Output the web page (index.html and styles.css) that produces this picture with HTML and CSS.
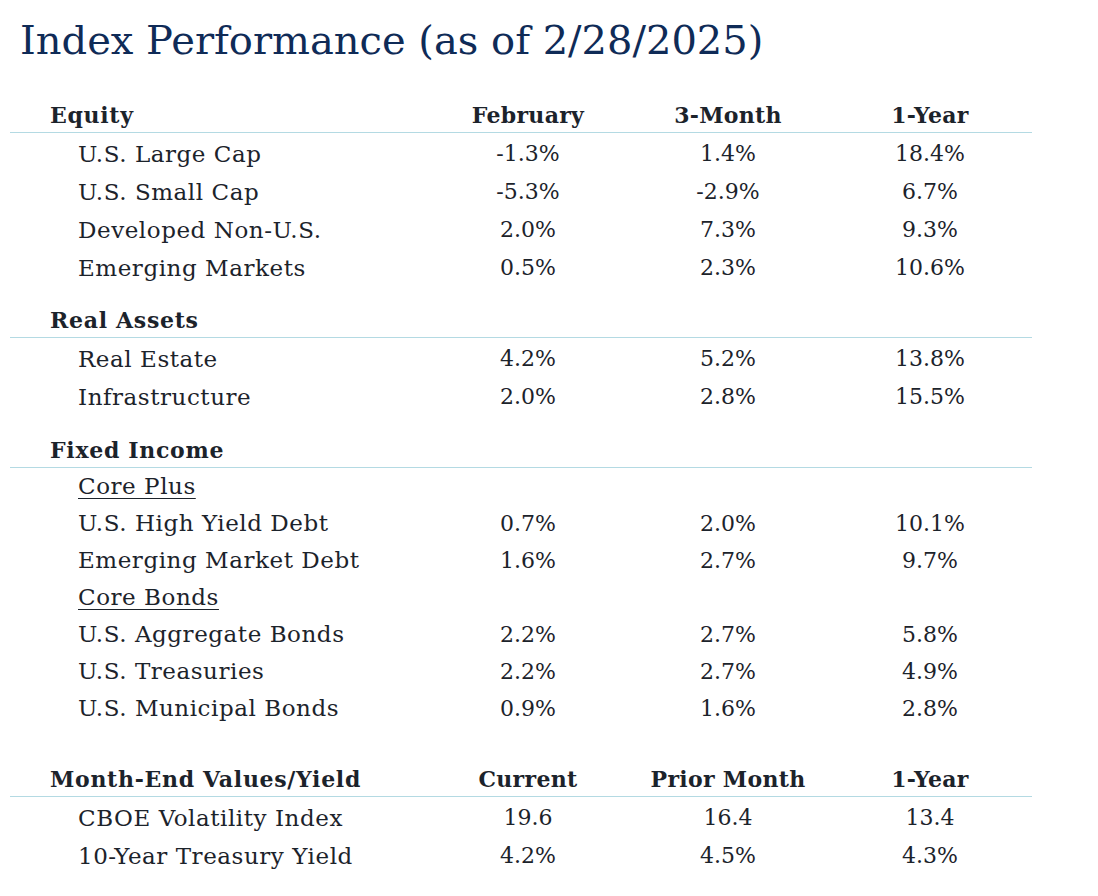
FILE: index.html
```html
<!DOCTYPE html>
<html>
<head>
<meta charset="utf-8">
<link rel="stylesheet" href="styles.css">
</head>
<body>
<h1 class="title">Index Performance (as of 2/28/2025)</h1>
<div class="table">
  <div class="section first">
    <div class="row head"><span class="label">Equity</span><span>February</span><span>3-Month</span><span>1-Year</span></div>
    <div class="row"><span class="label">U.S. Large Cap</span><span>-1.3%</span><span>1.4%</span><span>18.4%</span></div>
    <div class="row"><span class="label">U.S. Small Cap</span><span>-5.3%</span><span>-2.9%</span><span>6.7%</span></div>
    <div class="row"><span class="label">Developed Non-U.S.</span><span>2.0%</span><span>7.3%</span><span>9.3%</span></div>
    <div class="row"><span class="label">Emerging Markets</span><span>0.5%</span><span>2.3%</span><span>10.6%</span></div>
  </div>
  <div class="section real">
    <div class="row head"><span class="label">Real Assets</span><span></span><span></span><span></span></div>
    <div class="row"><span class="label">Real Estate</span><span>4.2%</span><span>5.2%</span><span>13.8%</span></div>
    <div class="row"><span class="label">Infrastructure</span><span>2.0%</span><span>2.8%</span><span>15.5%</span></div>
  </div>
  <div class="section fixed">
    <div class="row head"><span class="label">Fixed Income</span><span></span><span></span><span></span></div>
    <div class="row sub"><span class="label"><u>Core Plus</u></span><span></span><span></span><span></span></div>
    <div class="row"><span class="label">U.S. High Yield Debt</span><span>0.7%</span><span>2.0%</span><span>10.1%</span></div>
    <div class="row"><span class="label">Emerging Market Debt</span><span>1.6%</span><span>2.7%</span><span>9.7%</span></div>
    <div class="row sub"><span class="label"><u>Core Bonds</u></span><span></span><span></span><span></span></div>
    <div class="row"><span class="label">U.S. Aggregate Bonds</span><span>2.2%</span><span>2.7%</span><span>5.8%</span></div>
    <div class="row"><span class="label">U.S. Treasuries</span><span>2.2%</span><span>2.7%</span><span>4.9%</span></div>
    <div class="row"><span class="label">U.S. Municipal Bonds</span><span>0.9%</span><span>1.6%</span><span>2.8%</span></div>
  </div>
  <div class="section last">
    <div class="row head"><span class="label">Month-End Values/Yield</span><span>Current</span><span>Prior Month</span><span>1-Year</span></div>
    <div class="row"><span class="label">CBOE Volatility Index</span><span>19.6</span><span>16.4</span><span>13.4</span></div>
    <div class="row"><span class="label">10-Year Treasury Yield</span><span>4.2%</span><span>4.5%</span><span>4.3%</span></div>
  </div>
</div>
</body>
</html>
```
FILE: styles.css
```css
html, body {
  margin: 0;
  padding: 0;
  background: #ffffff;
}
body {
  font-family: "DejaVu Serif", "Liberation Serif", serif;
  color: #1c232b;
}
.title {
  margin: 0;
  padding: 16px 0 0 20px;
  height: 60px;
  font-family: "DejaVu Serif", serif;
  font-weight: normal;
  font-size: 40px;
  color: #0f2b57;
  line-height: 48px;
}
.table {
  width: 1022px;
  margin-left: 10px;
  padding-top: 22px;
}
.section.real {
  margin-top: 18px;
}
.section.fixed {
  margin-top: 19px;
}
.section.last {
  margin-top: 35px;
}
.row {
  display: grid;
  grid-template-columns: 418px 200px 200px 204px;
  box-sizing: border-box;
  height: 38px;
  padding-top: 4px;
  line-height: 34px;
  font-size: 22px;
}
.section.fixed .row {
  height: 37px;
  padding-top: 0;
  line-height: 37px;
}
.row span {
  text-align: center;
}
.row .label {
  text-align: left;
  padding-left: 68px;
  font-size: 23px;
  letter-spacing: 0.55px;
}
.section .row.head {
  height: 35px;
  padding-top: 1px;
  line-height: 33px;
  font-weight: bold;
  font-size: 22px;
  letter-spacing: 0.3px;
  border-bottom: 1px solid #b4dae3;
}
.row.head .label {
  padding-left: 40px;
  font-size: 22px;
  letter-spacing: 0.7px;
}
.row.sub u {
  text-decoration-thickness: 1px;
  text-underline-offset: 4px;
}
```
